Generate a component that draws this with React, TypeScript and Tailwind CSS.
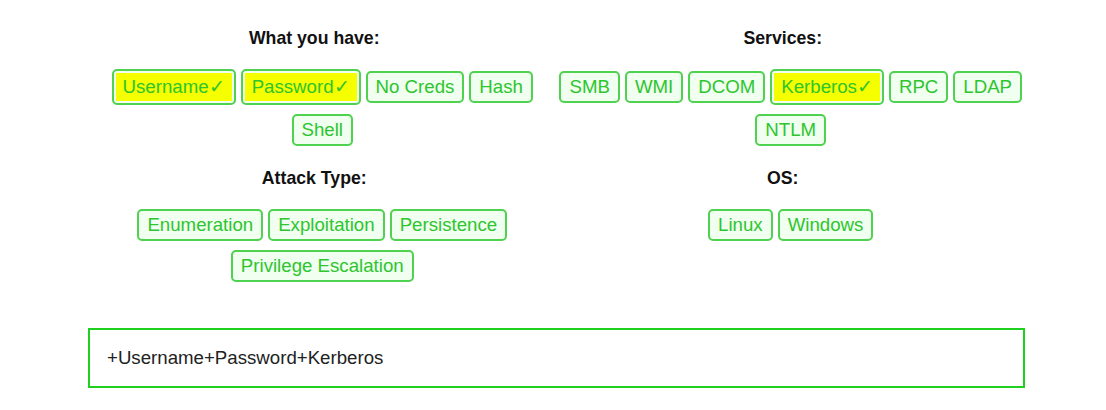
import React from "react";

type Item = { label: string; selected?: boolean };

const groups: { title: string; items: Item[] }[] = [
  {
    title: "What you have:",
    items: [
      { label: "Username", selected: true },
      { label: "Password", selected: true },
      { label: "No Creds" },
      { label: "Hash" },
      { label: "Shell" },
    ],
  },
  {
    title: "Services:",
    items: [
      { label: "SMB" },
      { label: "WMI" },
      { label: "DCOM" },
      { label: "Kerberos", selected: true },
      { label: "RPC" },
      { label: "LDAP" },
      { label: "NTLM" },
    ],
  },
  {
    title: "Attack Type:",
    items: [
      { label: "Enumeration" },
      { label: "Exploitation" },
      { label: "Persistence" },
      { label: "Privilege Escalation" },
    ],
  },
  {
    title: "OS:",
    items: [{ label: "Linux" }, { label: "Windows" }],
  },
];

function Chip({ item }: { item: Item }) {
  if (item.selected) {
    return (
      <button className="rounded-[5px] border-2 border-[#4fd24f] bg-[#f0fff0] p-[2px] text-[18.67px] leading-[22px] text-[#2ec52e]">
        <span className="block bg-[#f5ff00] px-[7px] py-[3px]">
          {item.label}
          <span style={{ fontFamily: '"DejaVu Sans", sans-serif' }} className="font-light">✓</span>
        </span>
      </button>
    );
  }
  return (
    <button className="rounded-[5px] border-2 border-[#4fd24f] bg-[#f0fff0] px-[8px] py-[3px] text-[18.67px] leading-[22px] text-[#2ec52e]">
      {item.label}
    </button>
  );
}

export default function App() {
  return (
    <div
      className="min-h-[410px] w-[1106px] bg-white"
      style={{ fontFamily: '"Liberation Sans", Arial, sans-serif' }}
    >
      <div className="ml-[88px] w-[937px] pt-[28px]">
        <div className="grid grid-cols-2 gap-y-[22px]">
          {groups.map((g) => (
            <div key={g.title} className="flex flex-col items-center">
              <h3 className="pr-[16px] text-[17.7px] font-bold leading-[20px] text-[#111]">{g.title}</h3>
              <div className="mt-[21px] flex flex-wrap items-center justify-center gap-x-[5px] gap-y-[9px]">
                {g.items.map((it) => (
                  <Chip key={it.label} item={it} />
                ))}
              </div>
            </div>
          ))}
        </div>
        <div className="mt-[46px] flex h-[60px] items-center border-2 border-[#1fd01f] pl-[17px] text-[18.67px] text-[#222]">
          +Username+Password+Kerberos
        </div>
      </div>
    </div>
  );
}
